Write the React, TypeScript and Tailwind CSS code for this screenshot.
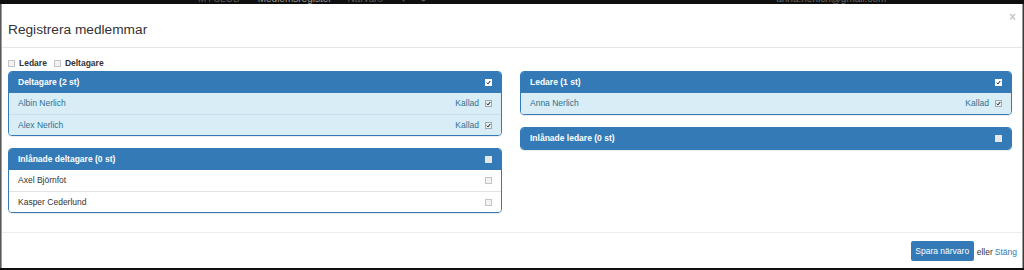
const font = { fontFamily: '"Liberation Sans", Arial, sans-serif' };

function Check({ variant }: { variant: "header-on" | "header-off" | "row-on" | "row-off" }) {
  const box =
    variant === "header-on"
      ? "bg-white border-white"
      : variant === "header-off"
      ? "bg-[#e6e6e6] border-[#e6e6e6]"
      : variant === "row-on"
      ? "bg-[#e9eef2] border-[#9aabb8]"
      : "bg-[#f2f2f2] border-[#c4c4c4]";
  const on = variant === "header-on" || variant === "row-on";
  return (
    <span className={`inline-flex h-[7px] w-[7px] items-center justify-center border ${box}`}>
      {on && (
        <svg viewBox="0 0 8 8" className="h-[7px] w-[7px]">
          <path d="M1.2 4.2 L3.2 6.2 L6.8 1.6" fill="none" stroke="#111" strokeWidth="1.6" />
        </svg>
      )}
    </span>
  );
}

type Row = { name: string; kallad?: boolean };

function Panel({ title, rows, info, on }: { title: string; rows: Row[]; info: boolean; on: boolean }) {
  return (
    <div className="overflow-hidden rounded-[4px] border border-[#337ab7] shadow-[0_1px_1px_rgba(0,0,0,0.08)]">
      <div className="flex h-[21px] items-center justify-between bg-[#337ab7] pl-[9px] pr-[9px] text-[8.5px] font-bold text-white">
        <span>{title}</span>
        <Check variant={on ? "header-on" : "header-off"} />
      </div>
      {rows.map((r, i) => (
        <div
          key={r.name}
          className={`flex h-[21px] items-center justify-between pl-[9px] pr-[9px] text-[8.5px] ${
            i > 0 ? (info ? "border-t border-[#c7dff0]" : "border-t border-[#e3e3e3]") : ""
          } ${info ? "bg-[#d9edf7] text-[#31708f]" : "bg-white text-[#333]"}`}
        >
          <span>{r.name}</span>
          <span className="flex items-center gap-[6px]">
            {r.kallad && <span>Kallad</span>}
            <Check variant={info ? "row-on" : "row-off"} />
          </span>
        </div>
      ))}
    </div>
  );
}

export default function App() {
  return (
    <div className="flex h-[270px] w-[1024px] flex-col overflow-hidden bg-[#0f0f0f]" style={font}>
      <div className="flex h-[4px] shrink-0 overflow-hidden text-[10px] leading-none">
        <div className="-mt-[6px] flex items-start">
          <span className="ml-[198px] text-[#5c5c5c]">MYCLUB</span>
          <span className="ml-[18px] text-[#9a9a9a]">Medlemsregister</span>
          <span className="ml-[16px] text-[#5c5c5c]">Närvaro</span>
          <span className="ml-[18px] text-[#5c5c5c]">▾</span>
          <span className="ml-[14px] text-[#5c5c5c]">●</span>
          <span className="ml-[350px] text-[#6a6a6a]">anna.nerlich@gmail.com</span>
        </div>
      </div>
      <div className="flex min-h-0 flex-1">
        <div className="w-[1px] shrink-0 bg-[#5a5a5a]" />
        <div className="flex min-w-0 flex-1 flex-col border-x border-[#9c9c9c] bg-white">
          <div className="flex h-[44px] shrink-0 items-start justify-between border-b border-[#e5e5e5] pl-[6px] pr-[6px]">
            <h4 className="mt-[19px] text-[13.7px] leading-none text-[#333]">Registrera medlemmar</h4>
            <span className="mt-[7px] text-[12px] font-bold leading-none text-[#c8c8c8]">×</span>
          </div>
          <div className="flex min-h-0 flex-1 flex-col px-[6px] pt-[10px]">
            <div className="flex h-[10px] items-center gap-[7px] text-[8.5px] font-bold text-[#333]">
              <label className="flex items-center gap-[4px]">
                <Check variant="row-off" />
                Ledare
              </label>
              <label className="flex items-center gap-[4px]">
                <Check variant="row-off" />
                Deltagare
              </label>
            </div>
            <div className="mt-[3px] grid grid-cols-[494px_492px] gap-x-[18px]">
              <div className="flex flex-col gap-[12px]">
                <Panel
                  title="Deltagare (2 st)"
                  info
                  on
                  rows={[
                    { name: "Albin Nerlich", kallad: true },
                    { name: "Alex Nerlich", kallad: true },
                  ]}
                />
                <Panel
                  title="Inlånade deltagare (0 st)"
                  info={false}
                  on={false}
                  rows={[{ name: "Axel Björnfot" }, { name: "Kasper Cederlund" }]}
                />
              </div>
              <div className="flex flex-col gap-[12px]">
                <Panel title="Ledare (1 st)" info on rows={[{ name: "Anna Nerlich", kallad: true }]} />
                <Panel title="Inlånade ledare (0 st)" info={false} on={false} rows={[]} />
              </div>
            </div>
          </div>
          <div className="flex h-[36px] shrink-0 items-start justify-end border-t border-[#ececec] pr-[5px] pt-[8px] text-[8.5px]">
            <button className="h-[20px] w-[63px] rounded-[2px] bg-[#337ab7] text-white">Spara närvaro</button>
            <span className="ml-[3px] mt-[5px] text-[#333]">eller</span>
            <span className="ml-[2px] mt-[5px] text-[#337ab7]">Stäng</span>
          </div>
        </div>
        <div className="w-[1px] shrink-0 bg-[#3a3a3a]" />
      </div>
      <div className="h-[2px] shrink-0" />
    </div>
  );
}
